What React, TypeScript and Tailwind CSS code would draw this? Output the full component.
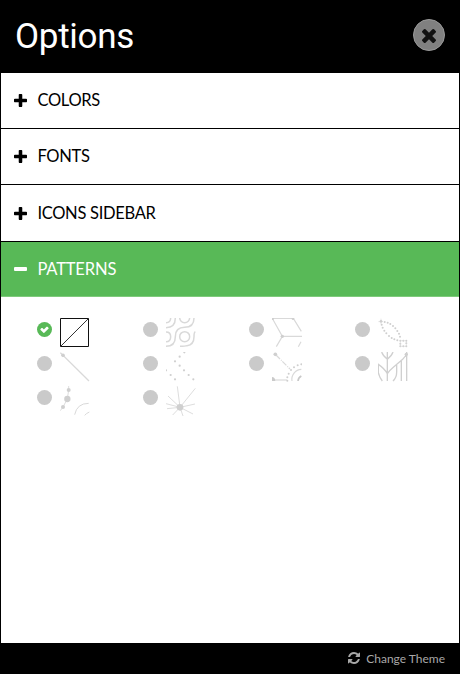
import React from "react";

const PLUS =
  "M1600 736v192q0 40-28 68t-68 28h-416v416q0 40-28 68t-68 28h-192q-40 0-68-28t-28-68v-416h-416q-40 0-68-28t-28-68v-192q0-40 28-68t68-28h416v-416q0-40 28-68t68-28h192q40 0 68 28t28 68v416h416q40 0 68 28t28 68z";
const TIMES =
  "M1490 1322q0 40-28 68l-136 136q-28 28-68 28t-68-28l-294-294-294 294q-28 28-68 28t-68-28l-136-136q-28-28-28-68t28-68l294-294-294-294q-28-28-28-68t28-68l136-136q28-28 68-28t68 28l294 294 294-294q28-28 68-28t68 28l136 136q28 28 28 68t-28 68l-294 294 294 294q28 28 28 68z";
const CHECK =
  "M1299 813l-422 422q-19 19-45 19t-45-19l-294-294q-19-19-19-45t19-45l102-102q19-19 45-19t45 19l147 147 275-275q19-19 45-19t45 19l102 102q19 19 19 45t-19 45z";
const REFRESH =
  "M1511 928q0 5-1 7-64 268-268 434.5t-478 166.5q-146 0-282.5-55t-243.5-157l-129 129q-19 19-45 19t-45-19-19-45v-448q0-26 19-45t45-19h448q26 0 45 19t19 45-19 45l-137 137q71 66 161 102t187 36q134 0 250-65t186-179q11-17 53-117 8-23 30-23h192q13 0 22.5 9.5t9.5 22.5zm25-800v448q0 26-19 45t-45 19h-448q-26 0-45-19t-19-45 19-45l138-138q-148-137-349-137-134 0-250 65t-186 179q-11 17-53 117-8 23-30 23h-199q-13 0-22.5-9.5t-9.5-22.5v-7q65-268 270-434.5t480-166.5q146 0 284 55.5t245 156.5l130-129q19-19 45-19t45 19 19 45z";

function Dots({ points, r = 2 }: { points: number[][]; r?: number }) {
  return (
    <g fill="#cfcfcf" stroke="none">
      {points.map(([x, y], i) => (
        <circle key={i} cx={x} cy={y} r={r} />
      ))}
    </g>
  );
}

const patterns: React.ReactNode[] = [
  <g key="none" stroke="#111" strokeWidth="3">
    <path d="M1.5 1.5H85.5V85.5H1.5Z" />
    <path d="M2 85L85 2" stroke="#333" />
  </g>,
  <g key="waves" strokeWidth="4.5">
    <circle cx="56" cy="-1" r="15" />
    <circle cx="56" cy="56" r="15" />
    <path d="M0 14Q14 14 14 0M0 29Q28 29 28 0M0 42Q14 42 14 56Q14 71 0 71M0 85Q28 85 28 56Q28 28 56 28Q84 28 84 0M42 85Q58 85 63 83Q84 80 84 56Q84 43 88 41" />
  </g>,
  <g key="hex" strokeWidth="3.5">
    <path d="M0 1H64L88 40M2 3L31 55H90M31 55L13 86M87 71L79 86" />
    <Dots points={[[31, 55]]} r={5} />
    <Dots points={[[2, 2], [63, 2]]} r={4} />
  </g>,
  <g key="leaf" strokeWidth="3">
    <path d="M1 11H15M9 2V18" strokeWidth="2" />
    <Dots points={[[9, 10]]} r={4} />
    <Dots
      points={[[20, 12], [29, 14], [37, 18], [45, 24], [52, 31], [58, 39], [63, 47], [66, 56], [11, 20], [14, 29], [19, 38], [25, 46], [33, 54], [41, 60], [49, 64], [58, 67], [67, 68], [67, 77], [67, 85], [76, 85], [85, 85], [85, 76], [85, 68], [76, 68]]}
      r={3}
    />
    <path d="M67 68H85V85H67Z" strokeWidth="1.5" />
  </g>,
  <g key="line" strokeWidth="4">
    <path d="M1 2L87 87" />
    <Dots points={[[9, 10]]} r={5.5} />
  </g>,
  <g key="dots">
    <Dots
      points={[[55, 1], [41, 14], [27, 28], [41, 41], [54, 55], [68, 69], [82, 82], [0, 55], [14, 69], [27, 82]]}
      r={3.3}
    />
  </g>,
  <g key="orbit" strokeWidth="3.5">
    <path d="M12 9L54 51" strokeDasharray="17 4 3 3" />
    <path d="M5 84H45" />
    <Dots points={[[10, 7]]} r={5.5} />
    <path d="M0 87V75Q9 75 10 87Z" fill="#cacaca" stroke="none" />
    <Dots points={[[46, 86], [46, 76], [50, 65], [57, 54], [66, 46], [77, 40], [88, 37]]} r={3} />
    <path d="M60 87A30 30 0 0 1 88 52" />
    <path d="M78 87A19 19 0 0 1 88 72" strokeWidth="5" stroke="#c8c8c8" />
  </g>,
  <g key="plant" strokeWidth="4" stroke="#d0d0d0">
    <path d="M28 0V87M11 0Q14 10 28 22Q42 10 45 0M28 65Q34 56 46 46L74 22Q85 12 86 2M28 65Q20 50 1 37V62Q4 76 13 87M56 39V60Q56 77 45 87M70 27V87M86 0V87" />
    <Dots points={[[85, 7]]} r={5} />
  </g>,
  <g key="molecule" strokeWidth="3">
    <path d="M26 0V12L22 39L9 63L1 74" stroke="#dedede" />
    <Dots points={[[22, 39]]} r={9.5} />
    <Dots points={[[26, 12], [9, 63]]} r={6} />
    <path d="M44 86Q51 52 86 52M74 88Q79 82 88 78" />
  </g>,
  <g key="burst" strokeWidth="2.7">
    <path d="M42 64L34 1M42 64L88 7M42 64L6 30M42 64L0 53M42 64L87 54M42 64L3 68M42 64L81 84M42 64L20 87M42 64L51 90" />
    <Dots points={[[42, 64]]} r={10} />
  </g>,
];

function Row({ label, raised = true }: { label: string; raised?: boolean }) {
  return (
    <div className="flex h-14 items-center border-b border-black pl-[13.4px] pb-px">
      <svg
        viewBox="192 256 1408 1408"
        className={raised ? "mt-px h-[13px] w-[13px]" : "h-[13px] w-[13px]"}
      >
        <path d={PLUS} transform="translate(0 128)" />
      </svg>
      <span className="ml-[10px] text-[16.5px] leading-6 tracking-[-0.3px] text-black">{label}</span>
    </div>
  );
}

export default function App() {
  return (
    <div className="flex h-[674px] w-[460px] flex-col overflow-hidden bg-black font-['Lato',sans-serif]">
      <header className="flex h-[73px] shrink-0 items-center justify-between px-[15px] pb-[2px]">
        <h1 className="pt-[2px] font-['Roboto',sans-serif] text-[35px] leading-[42px] font-normal tracking-[-0.3px] text-white">
          Options
        </h1>
        <button
          aria-label="Close"
          className="mt-[-1px] flex h-8 w-8 items-center justify-center rounded-full border border-[#999] bg-[#808080]"
        >
          <svg viewBox="302 366 1188 1188" className="mt-[2px] h-[14px] w-[14px]">
            <path d={TIMES} fill="#111" />
          </svg>
        </button>
      </header>
      <main className="mx-px flex flex-1 flex-col bg-white">
        <Row label="COLORS" raised={false} />
        <Row label="FONTS" />
        <div className="pt-px">
          <Row label="ICONS SIDEBAR" />
        </div>
        <div className="flex h-[55px] items-center border-b border-[#7fca7c] bg-[#58b957] pl-[13.4px] text-white">
          <span className="h-1 w-[13px] rounded-[1px] bg-white" />
          <span className="ml-[10px] text-[16.5px] leading-6 tracking-[-0.15px]">PATTERNS</span>
        </div>
        <div className="ml-9 grid grid-cols-[repeat(4,106px)] gap-y-1 pt-[21px]">
          {patterns.map((pattern, i) => (
            <div key={i} className="flex h-[30px]">
              {i === 0 ? (
                <svg viewBox="128 128 1536 1536" className="mt-[4px] h-[15px] w-[15px]">
                  <circle cx="896" cy="896" r="768" fill="#58b957" />
                  <path d={CHECK} fill="#fff" />
                </svg>
              ) : (
                <span className="mt-[4px] h-[15px] w-[15px] rounded-full bg-[#cacaca]" />
              )}
              <svg
                viewBox="0 0 90 90"
                fill="none"
                stroke="#d9d9d9"
                className="ml-2 h-[30px] w-[30px] overflow-hidden"
              >
                {pattern}
              </svg>
            </div>
          ))}
        </div>
      </main>
      <footer className="flex h-[31px] shrink-0 items-center justify-end pr-[15px] text-[#a8a8a8]">
        <svg viewBox="0 0 1536 1536" className="mr-[6px] mb-px h-3 w-3" fill="currentColor">
          <path d={REFRESH} />
        </svg>
        <span className="pt-px text-[12px] leading-4">Change Theme</span>
      </footer>
    </div>
  );
}
